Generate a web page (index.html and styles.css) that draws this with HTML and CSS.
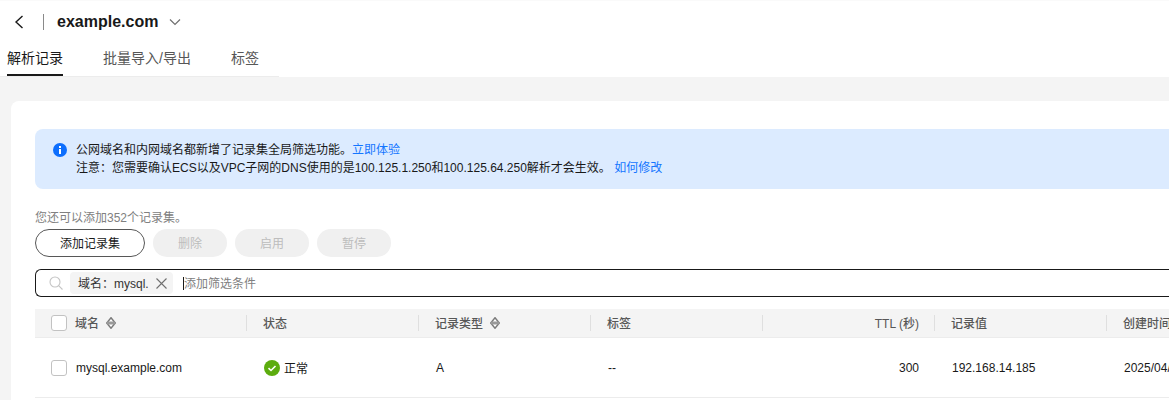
FILE: index.html
```html
<!DOCTYPE html>
<html lang="zh">
<head>
<meta charset="utf-8">
<title>example.com</title>
<link rel="stylesheet" href="styles.css">
</head>
<body>
<header class="top">
  <div class="title-row">
    <svg class="back" width="10" height="14" viewBox="0 0 10 14"><path d="M8.500 1 2 7l6.500 6" fill="none" stroke="#191919" stroke-width="1.400"/></svg>
    <span class="vline"></span>
    <span class="domain">example.com</span>
    <svg class="caret" width="12" height="8" viewBox="0 0 12 8"><path d="M1 1.500 6 6.500 11 1.500" fill="none" stroke="#707070" stroke-width="1.200"/></svg>
  </div>
  <nav class="tabs">
    <a class="tab active">解析记录</a>
    <a class="tab">批量导入/导出</a>
    <a class="tab">标签</a>
  </nav>
</header>
<main class="stage">
  <section class="card">
    <div class="alert">
      <svg class="info" width="14" height="14" viewBox="0 0 14 14"><circle cx="7" cy="7" r="7" fill="#0d6efd"/><rect x="6" y="6" width="2" height="5" fill="#fff"/><rect x="6" y="3" width="2" height="2" fill="#fff"/></svg>
      <div class="alert-text">
        <p>公网域名和内网域名都新增了记录集全局筛选功能。<a class="link">立即体验</a></p>
        <p>注意：您需要确认ECS以及VPC子网的DNS使用的是100.125.1.250和100.125.64.250解析才会生效。 <a class="link">如何修改</a></p>
      </div>
    </div>
    <p class="quota">您还可以添加352个记录集。</p>
    <div class="actions">
      <button class="btn primary">添加记录集</button>
      <button class="btn off">删除</button>
      <button class="btn off">启用</button>
      <button class="btn off">暂停</button>
    </div>
    <div class="search">
      <svg class="mag" width="14" height="14" viewBox="0 0 14 14"><circle cx="6" cy="6" r="5" fill="none" stroke="#c4c4c4" stroke-width="1.100"/><path d="M9.600 9.600 13.500 13.500" stroke="#c4c4c4" stroke-width="1.100"/></svg>
      <span class="chip">域名：mysql.
        <svg class="x" width="11" height="11" viewBox="0 0 11 11"><path d="M.5.500l10 10M10.500.500l-10 10" stroke="#707070" stroke-width="1.100"/></svg>
      </span>
      <span class="cursor"></span>
      <span class="placeholder">添加筛选条件</span>
    </div>
    <div class="table">
      <div class="row head">
        <div class="cell first"><span class="check"></span><span class="name-h">域名</span>
          <svg class="sort" width="10" height="12" viewBox="0 0 10 12"><path d="M5 .800 9.300 6 5 11.200 .700 6z" fill="#fff" stroke="#7a7a7a" stroke-width="1.500"/><rect x="1" y="4.500" width="8" height="3" fill="#9a9a9a"/></svg></div>
        <div class="cell">状态</div>
        <div class="cell">记录类型
          <svg class="sort" width="10" height="12" viewBox="0 0 10 12"><path d="M5 .800 9.300 6 5 11.200 .700 6z" fill="#fff" stroke="#7a7a7a" stroke-width="1.500"/><rect x="1" y="4.500" width="8" height="3" fill="#9a9a9a"/></svg></div>
        <div class="cell">标签</div>
        <div class="cell right">TTL (秒)</div>
        <div class="cell">记录值</div>
        <div class="cell nodiv">创建时间</div>
      </div>
      <div class="row body">
        <div class="cell first"><span class="check"></span><span class="name">mysql.example.com</span></div>
        <div class="cell"><svg class="ok" width="16" height="16" viewBox="0 0 16 16"><circle cx="8" cy="8" r="8" fill="#5cac0e"/><path d="M4.500 8.200 7 10.500l4.500-4.500" fill="none" stroke="#fff" stroke-width="1.600"/></svg>正常</div>
        <div class="cell">A</div>
        <div class="cell">--</div>
        <div class="cell right">300</div>
        <div class="cell">192.168.14.185</div>
        <div class="cell nodiv">2025/04/</div>
      </div>
    </div>
  </section>
</main>
</body>
</html>
```
FILE: styles.css
```css
* { box-sizing: border-box; }
html, body { margin: 0; padding: 0; }
body {
  width: 1169px;
  height: 400px;
  overflow: hidden;
  background: #f4f4f4;
  color: #191919;
  font-family: "Liberation Sans", "Noto Sans CJK SC", sans-serif;
  font-size: 12px;
}
p { margin: 0; }

.top { background: #fff; height: 77px; border-top: 1px solid #fafafa; }
.title-row { display: flex; align-items: center; height: 41px; padding-left: 14px; }
.vline { width: 1px; height: 16px; background: #8a8a8a; margin-left: 19px; }
.domain { font-size: 16px; font-weight: 700; margin-left: 13px; }
.caret { margin-left: 11px; }

.tabs { display: flex; width: 279px; height: 35px; padding-left: 7px; border-bottom: 1px solid #ececec; gap: 40px; }
.tab { height: 34px; font-size: 14px; line-height: 33px; color: #575757; }
.tab.active { color: #191919; border-bottom: 2px solid #191919; }

.stage { padding: 24px 0 0 11px; }
.card { background: #fff; border-radius: 8px 0 0 0; padding: 28px 0 0 24px; height: 299px; overflow: hidden; }

.alert { display: flex; height: 60px; background: #dcebff; border-radius: 8px 0 0 8px; padding: 12px 0 0 18px; }
.info { margin: 2px 9px 0 0; flex: none; }
.alert-text p { line-height: 18px; height: 18px; }
.link { color: #1476ff; }

.quota { color: #808080; line-height: 16px; margin-top: 21px; }
.actions { display: flex; gap: 8px; margin-top: 3px; }
.btn { height: 28px; border-radius: 14px; font: inherit; padding: 0 0 2px; }
.btn.primary { width: 110px; background: #fff; border: 1px solid #575757; color: #191919; }
.btn.off { width: 74px; background: #f0f0f0; border: 0; color: #bdbdbd; }

.search { display: flex; align-items: center; height: 28px; margin-top: 12px; border: 1px solid #191919; border-right: 0; border-radius: 6px 0 0 6px; padding: 0 0 0 13px; }
.chip { display: flex; align-items: center; height: 22px; margin-left: 7px; padding: 0 6px 2px 8px; width: 103px; background: #f4f4f4; border-radius: 4px; color: #333; white-space: nowrap; }
.x { margin: 2px 0 0 7px; }
.cursor { width: 1px; height: 13px; background: #191919; margin-left: 10px; }
.placeholder { color: #808080; padding-bottom: 2px; }

.table { margin-top: 12px; }
.row { display: grid; grid-template-columns: 212px repeat(5, 172px) 1fr; align-items: center; }
.head { height: 29px; background: #f4f4f4; border-bottom: 1px solid #ececec; color: #575757; font-weight: 500; }
.body { height: 60px; border-bottom: 1px solid #ececec; }
.cell { display: flex; align-items: center; padding-left: 16px; white-space: nowrap; overflow: hidden; }
.head .cell { height: 16px; padding-bottom: 2px; border-right: 1px solid #dfdfdf; }
.head .cell.nodiv { border-right: 0; }
.body .cell { padding-left: 17px; }
.cell.right, .body .cell.right { justify-content: flex-end; padding: 0 16px 0 0; }
.head .cell.right { padding: 0 15px 2px 0; }
.cell.first, .body .cell.first { padding-left: 16px; }
.check { width: 16px; height: 16px; border: 1px solid #c2c2c2; border-radius: 3px; background: #fff; flex: none; }
.head .check { margin-bottom: -2px; }
.name-h { margin-left: 8px; }
.name { margin-left: 9px; }
.sort { margin: 0 0 -2px 7px; flex: none; }
.ok { margin-right: 4px; flex: none; }
```
